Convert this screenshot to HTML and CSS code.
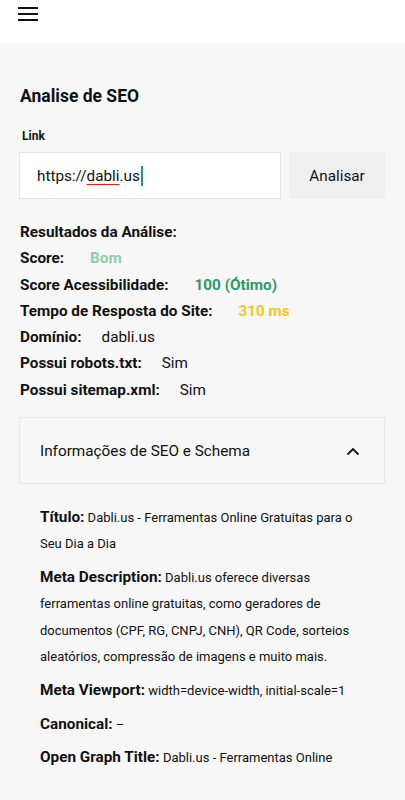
FILE: index.html
```html
<!DOCTYPE html>
<html>

<head>
    <meta charset="utf-8">
    <meta name="viewport" content="width=device-width, initial-scale=1.0">
    <link rel="stylesheet" href="styles.css">
</head>

<body>
    <div class="topbar">
        <span class="burger"><i></i><i></i><i></i></span>
    </div>
    <div class="page">
        <h2 class="title">Analise de SEO</h2>
        <label class="label" for="url">Link</label>
        <div class="search">
            <div class="field"><span>https://<u>dabli</u>.us</span><b class="caret"></b></div>
            <button class="btn">Analisar</button>
        </div>

        <div class="results">
            <div class="row"><b>Resultados da Análise:</b></div>
            <div class="row"><b>Score:</b><span class="val strong good-light">Bom</span></div>
            <div class="row"><b>Score Acessibilidade:</b><span class="val strong good">100 (Ótimo)</span></div>
            <div class="row"><b>Tempo de Resposta do Site:</b><span class="val strong warn">310 ms</span></div>
            <div class="row"><b>Domínio:</b><span class="val">dabli.us</span></div>
            <div class="row"><b>Possui robots.txt:</b><span class="val">Sim</span></div>
            <div class="row"><b>Possui sitemap.xml:</b><span class="val">Sim</span></div>
        </div>

        <div class="accordion">
            <span>Informações de SEO e Schema</span>
            <svg width="14" height="10" viewBox="0 0 14 10"><path d="M1.5 8.5 7 3l5.5 5.5" fill="none" stroke="#111" stroke-width="1.8"/></svg>
        </div>

        <div class="details">
            <p><b>Título:</b> Dabli.us - Ferramentas Online Gratuitas para o Seu Dia a Dia</p>
            <p><b>Meta Description:</b> Dabli.us oferece diversas ferramentas online gratuitas, como geradores de documentos (CPF, RG, CNPJ, CNH), QR Code, sorteios aleatórios, compressão de imagens e muito mais.</p>
            <p><b>Meta Viewport:</b> width=device-width, initial-scale=1</p>
            <p><b>Canonical:</b> –</p>
            <p><b>Open Graph Title:</b> Dabli.us - Ferramentas Online</p>
        </div>
    </div>
</body>

</html>
```
FILE: styles.css
```css
html,
body {
    margin: 0;
    font-family: Roboto, "Noto Sans", sans-serif;
    color: #111;
    background: #f7f7f7;
}

.topbar {
    height: 43px;
    background: #fff;
    padding: 0 18px;
    box-sizing: border-box;
}

.burger {
    display: flex;
    flex-direction: column;
    gap: 4px;
    width: 20px;
    padding-top: 7px;
}

.burger i {
    display: block;
    height: 2px;
    background: #111;
}

.page {
    padding: 41px 20px 0 20px;
}

.title {
    margin: 0;
    font-size: 17.5px;
    line-height: 24px;
    font-weight: 700;
}

.label {
    display: block;
    margin: 20px 0 0 2px;
    font-size: 12px;
    font-weight: 700;
    line-height: 16px;
}

.search {
    display: flex;
    gap: 8px;
    margin: 8px 0 0 -1px;
}

.field {
    flex: 1;
    height: 47px;
    box-sizing: border-box;
    background: #fff;
    border: 1px solid #e4e4e4;
    display: flex;
    align-items: center;
    padding-left: 17px;
    font-size: 15.3px;
}

.field u {
    text-decoration-color: #e02020;
    text-underline-offset: 3px;
}

.caret {
    width: 2px;
    height: 20px;
    background: #1e9b82;
    margin-left: 1px;
}

.btn {
    width: 96px;
    height: 47px;
    border: none;
    background: #efefef;
    font-family: inherit;
    font-size: 15.3px;
    color: #111;
}

.results {
    margin-top: 20px;
}

.row {
    font-size: 15.3px;
    line-height: 26.3px;
}

.val {
    margin-left: 20px;
}

.val.strong {
    font-weight: 700;
    margin-left: 26px;
}

.good-light {
    color: #8ccfa7;
}

.good {
    color: #2a9b68;
}

.warn {
    color: #f2c81c;
}

.accordion {
    margin: 14px 0 0 -1px;
    height: 67px;
    box-sizing: border-box;
    border: 1px solid #e8e8e8;
    display: flex;
    align-items: center;
    justify-content: space-between;
    padding: 0 24px 0 20px;
    font-size: 15.3px;
}

.details {
    padding: 21px 20px 0 20px;
}

.details p {
    margin: 0 0 7.5px;
    font-size: 13px;
    line-height: 26.3px;
}

.details b {
    font-size: 15.3px;
    line-height: 1;
}
```
